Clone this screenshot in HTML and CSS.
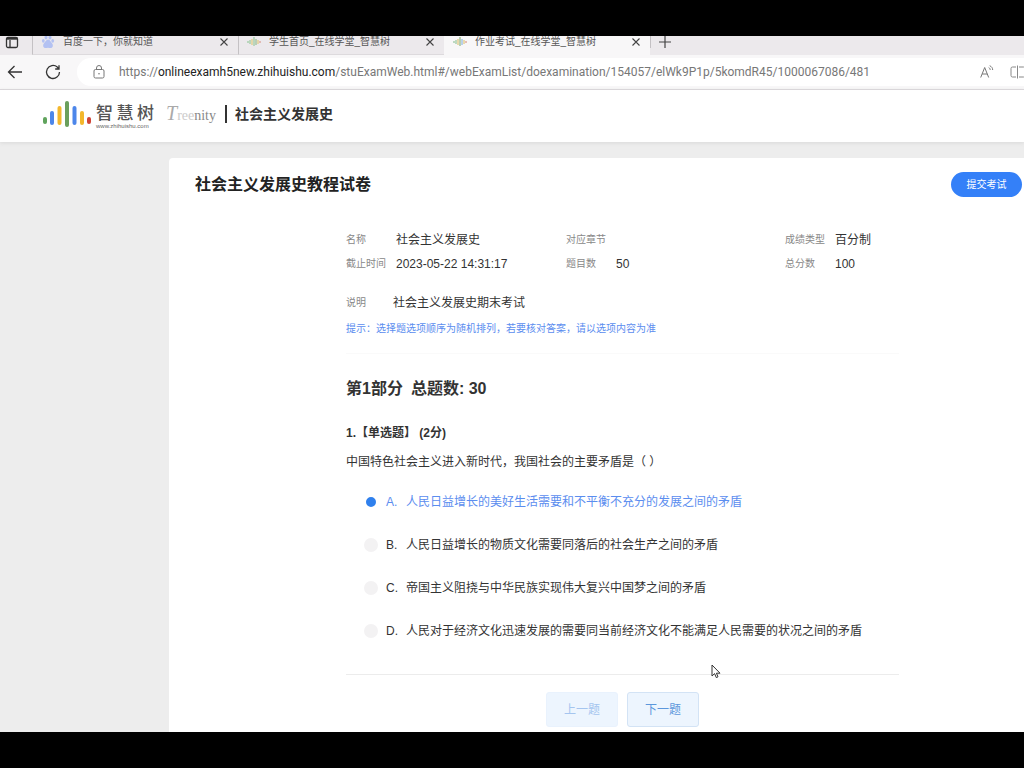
FILE: index.html
```html
<!DOCTYPE html>
<html lang="zh-CN">
<head>
<meta charset="utf-8">
<title>作业考试_在线学堂_智慧树</title>
<link rel="stylesheet" href="styles.css">
</head>
<body>
<div class="browser">
  <div class="tabs">
    <button class="tab-menu" aria-label="标签页操作"><svg width="14" height="14" viewBox="0 0 14 14" fill="none" stroke="#333" stroke-width="1.3"><rect x="1.5" y="1.5" width="11" height="10" rx="1.5"/><path d="M1.5 2.700h11" stroke-width="2"/><path d="M5 4v7.500"/></svg></button>
    <div class="tab">
      <svg class="favicon" width="14" height="14" viewBox="0 0 14 14" fill="#b3c1f2"><ellipse cx="5" cy="2.500" rx="1.500" ry="2"/><ellipse cx="9" cy="2.500" rx="1.500" ry="2"/><ellipse cx="2.300" cy="5.800" rx="1.400" ry="1.900"/><ellipse cx="11.700" cy="5.800" rx="1.400" ry="1.900"/><path d="M7 4.500c2 0 2.500 2 4 3.700 1.500 1.500 1 4.800-1.500 4.800-1 0-1.500-.3-2.500-.3s-1.500.3-2.500.3C2 13 1.500 9.700 3 8.200 4.500 7 5 4.500 7 4.500z"/></svg>
      <span class="tab-name">百度一下，你就知道</span>
      <button class="close" aria-label="关闭"><svg width="8" height="8" viewBox="0 0 8 8" stroke="#444" stroke-width="1.100"><path d="M.5.500l7 7M7.500.500l-7 7"/></svg></button>
    </div>
    <div class="tab">
      <svg class="favicon" width="14" height="14" viewBox="0 0 14 14" stroke-width="1.500"><path stroke="#a9cfae" d="M1 6v2M3 5v4M7 2v9"/><path stroke="#e2cf92" d="M5 4v6M11 5v4"/><path stroke="#a9c4a6" d="M9 4v6"/><path stroke="#dfaaa2" d="M13 6v2"/></svg>
      <span class="tab-name">学生首页_在线学堂_智慧树</span>
      <button class="close" aria-label="关闭"><svg width="8" height="8" viewBox="0 0 8 8" stroke="#444" stroke-width="1.100"><path d="M.5.500l7 7M7.500.500l-7 7"/></svg></button>
    </div>
    <div class="tab active">
      <svg class="favicon" width="14" height="14" viewBox="0 0 14 14" stroke-width="1.500"><path stroke="#a9cfae" d="M1 6v2M3 5v4"/><path stroke="#e2cf92" d="M5 4v6M11 5v4"/><path stroke="#a4c29a" d="M7 2v9"/><path stroke="#a5c4e4" d="M9 4v6"/><path stroke="#dfaaa2" d="M13 6v2"/></svg>
      <span class="tab-name">作业考试_在线学堂_智慧树</span>
      <button class="close" aria-label="关闭"><svg width="8" height="8" viewBox="0 0 8 8" stroke="#444" stroke-width="1.100"><path d="M.5.500l7 7M7.500.500l-7 7"/></svg></button>
    </div>
    <button class="new-tab" aria-label="新建标签页"><svg width="12" height="12" viewBox="0 0 12 12" stroke="#444" stroke-width="1.200"><path d="M0 6h12M6 0v12"/></svg></button>
  </div>

  <div class="toolbar">
    <button class="tool" aria-label="后退"><svg width="16" height="14" viewBox="0 0 16 14" fill="none" stroke="#333" stroke-width="1.300"><path d="M15 7H1.500M7.500 1l-6 6 6 6"/></svg></button>
    <button class="tool" aria-label="刷新"><svg width="16" height="16" viewBox="0 0 16 16" fill="none" stroke="#333" stroke-width="1.300"><path d="M14.500 8A6.500 6.500 0 1 1 12.300 3.100L14 5M14 1.200V5h-3.800"/></svg></button>
    <div class="address">
      <svg width="12" height="14" viewBox="0 0 12 14" fill="none" stroke="#777"><rect x="1" y="4.500" width="10" height="8.500" rx="1.500"/><path d="M3.500 4.500V3a2.500 2.500 0 0 1 5 0v1.500"/><circle cx="6" cy="8.700" r=".8" fill="#777" stroke="none"/></svg>
      <span class="url">https://<b>onlineexamh5new.zhihuishu.com</b>/stuExamWeb.html#/webExamList/doexamination/154057/elWk9P1p/5komdR45/1000067086/481</span>
      <svg class="read" width="14" height="14" viewBox="0 0 14 14" fill="none" stroke="#777"><path d="M.7 12.500L4.700 2.500l4 10M2.200 9h5M8.700 2.500c1 .5 1.500 1.400 1.500 2.500M9.700.7C11.500 1.500 12.700 3 12.700 5"/></svg>
      <svg width="16" height="14" viewBox="0 0 16 14" fill="none" stroke="#888"><path d="M6 2H2.500A1.500 1.500 0 0 0 1 3.500v7A1.500 1.500 0 0 0 2.500 12H6M7.500.500v13M9 2h4.500A1.500 1.500 0 0 1 15 3.500v7a1.500 1.500 0 0 1-1.500 1.500H9"/></svg>
    </div>
  </div>

  <header class="site-header">
    <svg class="logo-mark" width="50" height="28" viewBox="0 0 50 28" stroke-width="4" stroke-linecap="round"><path stroke="#5fa35c" d="M3 19v3"/><path stroke="#4c86ea" d="M10 13v10"/><path stroke="#f3b72c" d="M17.500 8v15"/><path stroke="#6a9f5c" d="M25 3v22"/><path stroke="#4c86ea" d="M32.500 8v15"/><path stroke="#f3b72c" d="M40 13v10"/><path stroke="#cf4437" d="M47 19v3"/></svg>
    <div class="brand"><span class="brand-name"><span>智</span><span>慧</span><span>树</span></span><span class="brand-url">www.zhihuishu.com</span></div>
    <span class="treenity"><span class="initial">T</span><span class="pale">ree</span>nity</span>
    <h1 class="course">社会主义发展史</h1>
  </header>

  <main class="page">
    <section class="card">
      <div class="card-head">
        <h2>社会主义发展史教程试卷</h2>
        <button class="submit">提交考试</button>
      </div>
      <div class="content">
        <dl class="info">
          <div><dt>名称</dt><dd>社会主义发展史</dd></div>
          <div><dt>对应章节</dt><dd></dd></div>
          <div><dt>成绩类型</dt><dd>百分制</dd></div>
          <div><dt>截止时间</dt><dd>2023-05-22 14:31:17</dd></div>
          <div><dt>题目数</dt><dd>50</dd></div>
          <div><dt>总分数</dt><dd>100</dd></div>
        </dl>
        <div class="desc"><span class="desc-label">说明</span><span>社会主义发展史期末考试</span></div>
        <p class="tip">提示：选择题选项顺序为随机排列，若要核对答案，请以选项内容为准</p>
        <h3 class="part"><span>第1部分</span><span>总题数: 30</span></h3>
        <h4 class="q-title">1.【单选题】 (2分)</h4>
        <form>
          <fieldset class="options">
            <legend>中国特色社会主义进入新时代，我国社会的主要矛盾是（ ）</legend>
            <label class="option"><input type="radio" name="q1" checked><span class="letter">A.</span><span>人民日益增长的美好生活需要和不平衡不充分的发展之间的矛盾</span></label>
            <label class="option"><input type="radio" name="q1"><span class="letter">B.</span><span>人民日益增长的物质文化需要同落后的社会生产之间的矛盾</span></label>
            <label class="option"><input type="radio" name="q1"><span class="letter">C.</span><span>帝国主义阻挠与中华民族实现伟大复兴中国梦之间的矛盾</span></label>
            <label class="option"><input type="radio" name="q1"><span class="letter">D.</span><span>人民对于经济文化迅速发展的需要同当前经济文化不能满足人民需要的状况之间的矛盾</span></label>
          </fieldset>
          <div class="pager">
            <button type="button" disabled>上一题</button>
            <button type="button">下一题</button>
          </div>
        </form>
      </div>
    </section>
  </main>
</div>
<svg class="cursor" width="10" height="15" viewBox="0 0 10 15" fill="#fff" stroke="#333"><path d="M1 1v11l2.600-2.400L5.300 13.600l1.700-.8-1.600-3.600H9z"/></svg>
</body>
</html>
```
FILE: styles.css
```css
* { box-sizing: border-box; }

body {
  margin: 0;
  height: 100vh;
  padding: 36px 0;
  background: #000;
  color: #333;
  font: 12px/20px "Liberation Sans", "Noto Sans CJK SC", sans-serif;
  overflow: hidden;
}

button {
  padding: 0;
  border: 0;
  background: none;
  font: inherit;
  color: inherit;
}

svg { flex: none; display: block; }
h1, h2, h3, h4, p, dl, dd { margin: 0; }

.browser {
  display: flex;
  flex-direction: column;
  height: 100%;
  overflow: hidden;
  background: #ededed;
}

/* Tab strip */
.tabs {
  display: flex;
  flex: none;
  height: 19px;
  background: #ece9ec;
}
.tab-menu { width: 32px; padding-left: 5px; height: 14px; }
.tab {
  display: flex;
  align-items: center;
  width: 206px;
  height: 19px;
  padding: 0 4px 6px 8px;
  border-left: 1px solid #c4c1c4;
  border-bottom: 1px solid #dddadd;
  font-size: 10px;
  line-height: 12px;
  color: #555;
}
.tab.active { background: #f8f7f8; border-color: #f8f7f8; }
.favicon { margin-right: 8px; }
.tab-name { flex: 1; white-space: nowrap; }
.close { padding: 0 6px; }
.new-tab { padding: 0 8px; height: 12px; border-left: 1px solid #c4c1c4; }

/* Address bar */
.toolbar {
  display: flex;
  flex: none;
  align-items: center;
  gap: 22px;
  height: 35px;
  padding-left: 7px;
  background: #f8f7f8;
  border-bottom: 1px solid #d9d5d9;
}
.address {
  display: flex;
  flex: 1;
  align-items: center;
  height: 28px;
  margin-left: -6px;
  padding-left: 16px;
  border-radius: 14px 0 0 14px;
  background: #fff;
  overflow: hidden;
}
.url {
  flex: 1;
  padding-left: 14px;
  font: 12px/20px Roboto, sans-serif;
  color: #777;
  white-space: nowrap;
}
.url b { font-weight: 400; color: #222; }
.read { margin-right: 16px; }
.address > svg:last-child { margin-right: -2px; }

/* Site header */
.site-header {
  display: flex;
  flex: none;
  align-items: center;
  height: 52px;
  padding: 0 0 4px 42px;
  background: #fff;
  box-shadow: 0 1px 4px #d8d8d8;
  position: relative;
}
.brand { width: 58px; margin: 4px 12px 0 4px; }
.brand-name {
  display: flex;
  justify-content: space-between;
  font-size: 17px;
  font-weight: 500;
  line-height: 19px;
  color: #555;
}
.brand-url { display: block; font-size: 6px; line-height: 6px; color: #666; }
.treenity { font: 14px/20px "Liberation Serif", serif; color: #888; }
.initial { font-size: 20px; font-style: italic; color: #aaa; }
.pale { color: #ccc; }
.course {
  margin-left: 9px;
  padding-left: 8px;
  border-left: 2px solid #333;
  font-size: 14px;
  line-height: 18px;
}

/* Exam card */
.page { flex: 1; min-height: 0; padding: 16px 0 0 169px; }
.card {
  height: 100%;
  padding-top: 14px;
  border-radius: 4px 0 0 0;
  background: #fff;
}
.card-head {
  display: flex;
  align-items: center;
  justify-content: space-between;
  padding: 0 2px 0 26px;
}
.card-head h2 { font-size: 16px; line-height: 24px; color: #222; }
.submit {
  width: 71px;
  height: 25px;
  border-radius: 13px;
  background: #3480f8;
  color: #fff;
  font-size: 10px;
}
.content { max-width: 730px; padding: 31px 0 0 177px; }
.info {
  display: grid;
  grid-template-columns: 220px 219px 1fr;
  line-height: 24px;
}
.info div { display: flex; min-height: 24px; }
.info dt, .desc-label { width: 50px; font-size: 10px; color: #888; }
.desc { display: flex; margin-top: 15px; line-height: 24px; }
.desc-label { width: 47px; }
.tip {
  margin-top: 4px;
  padding-bottom: 14px;
  border-bottom: 1px solid #fafafa;
  font-size: 10px;
  color: #5b8def;
}
.part {
  display: flex;
  gap: 8px;
  margin-top: 23px;
  font-size: 16px;
  line-height: 24px;
}
.q-title { margin: 22px 0 9px; font-size: 12px; }

/* Answers */
.options {
  margin: 0;
  padding: 0 0 22px;
  border: 0;
  border-bottom: 1px solid #ececec;
}
.options legend { padding: 0; margin-bottom: 8px; }
.option { display: flex; align-items: center; height: 43px; padding-left: 18px; white-space: nowrap; }
.option input {
  appearance: none;
  width: 14px;
  height: 14px;
  margin: 0 8px 0 0;
  border-radius: 50%;
  background: #f3f2f3;
}
.option input:checked { background: #2f80ed; border: 2px solid #fff; }
.option:has(input:checked) { color: #5b8def; }
.letter { width: 20px; }

.pager { display: flex; justify-content: center; gap: 9px; padding-top: 17px; }
.pager button {
  width: 72px;
  height: 35px;
  border: 1px solid #d3e3f5;
  border-radius: 3px;
  background: #edf5fe;
  color: #5c97dc;
}
.pager button:disabled { border-color: #e9f2fd; color: #a5c5ef; }

/* Pointer above the page */
.cursor { position: absolute; left: 711px; top: 664px; }
```
